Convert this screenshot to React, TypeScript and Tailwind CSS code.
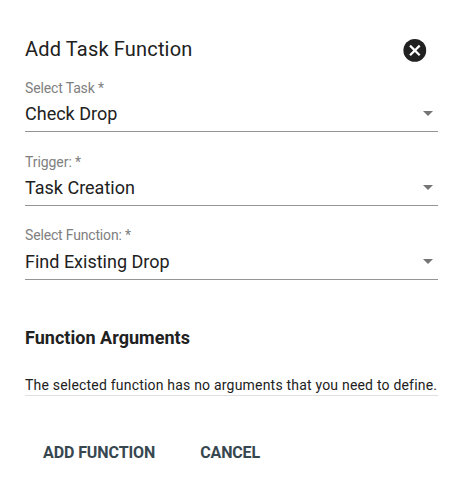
const fields = [
  { label: "Select Task *", value: "Check Drop", labelClass: "h-[20px] tracking-[-0.14px]" },
  { label: "Trigger: *", value: "Task Creation", labelClass: "h-[20px] tracking-[-0.07px]" },
  { label: "Select Function: *", value: "Find Existing Drop", labelClass: "-mt-px h-[21px] tracking-[-0.17px]" },
];

export default function App() {
  return (
    <div className="h-[487px] w-[463px] bg-white px-[25px] pt-[36px] font-['Roboto',sans-serif] text-[#212121]">
      <header className="flex h-[29px] items-start justify-between pr-[11px]">
        <h1 className="text-[20px] leading-[26px] tracking-[0.17px]">Add Task Function</h1>
        <svg className="mt-[2px] h-6 w-6" viewBox="0 0 24 24">
          <circle cx="11.8" cy="12.4" r="11.4" fill="#212121" />
          <path d="M7 7.6l9.7 9.7M16.7 7.6l-9.7 9.7" stroke="#fff" strokeWidth="2.2" />
        </svg>
      </header>
      <div className="mt-[14px] flex flex-col gap-[21px]">
        {fields.map((f) => (
          <div key={f.label} className="h-[53px] border-b border-[#949494]">
            <div className={`text-[14px] leading-[18px] text-[#808080] ${f.labelClass}`}>{f.label}</div>
            <div className="flex h-[28px] items-center justify-between pr-[5px] text-[18px]">
              <span>{f.value}</span>
              <svg className="h-[5px] w-[10px]" viewBox="0 0 10 5"><path d="M0 0h10L5 5z" fill="#757575" /></svg>
            </div>
          </div>
        ))}
      </div>
      <h2 className="mt-[46px] text-[18px] font-bold leading-[24px] tracking-[0.03px]">Function Arguments</h2>
      <p className="mt-[25px] h-[21px] whitespace-nowrap border-b border-[#e0e0e0] text-[14px] leading-[20px] tracking-[0.2px]">The selected function has no arguments that you need to define.</p>
      <div className="mt-[45px] flex gap-[45px] pl-[18px] text-[16px] font-bold leading-[24px] text-[#37474f]">
        <button className="tracking-[-0.09px]">ADD FUNCTION</button>
        <button className="tracking-[-0.15px]">CANCEL</button>
      </div>
    </div>
  );
}
